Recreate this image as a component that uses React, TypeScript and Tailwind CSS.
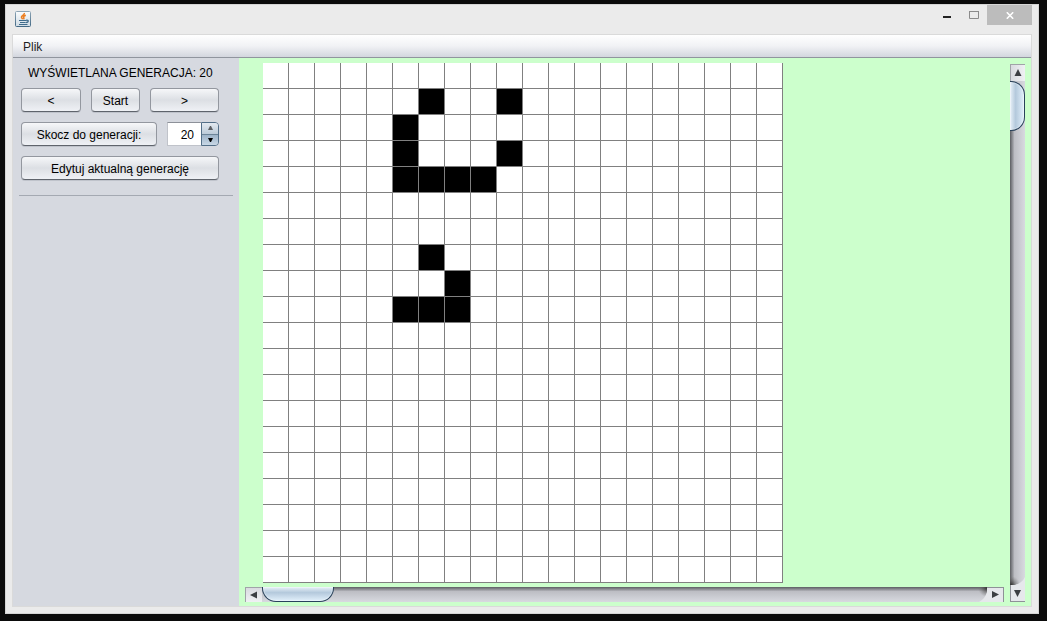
import { useState, type ReactNode } from "react";

const SIZE = 20;
const LIVE = new Set([
  "1-6", "1-9", "2-5", "3-5", "3-9", "4-5", "4-6", "4-7", "4-8",
  "7-6", "8-7", "9-5", "9-6", "9-7",
]);

const buttonStyle =
  "h-6 rounded border border-[#93979f] border-b-[#5f646c] bg-linear-to-b from-[#f6f7f9] via-[#dcdfe4] to-[#eff1f5] shadow-[0_1px_0_#bfc3cb] text-center pt-px leading-5";

function NimbusButton({ className, children, label }: { className: string; children: ReactNode; label?: string }) {
  return (
    <button type="button" aria-label={label} className={`${buttonStyle} ${className}`}>
      {children}
    </button>
  );
}

function JavaIcon() {
  return (
    <svg viewBox="0 0 16 16" className="size-4" aria-hidden="true">
      <defs>
        <linearGradient id="java-bg" x2="0" y2="1">
          <stop stopColor="#fafcfd" />
          <stop offset="1" stopColor="#cfdbe4" />
        </linearGradient>
        <linearGradient id="java-edge" x2="0" y2="1">
          <stop stopColor="#8ea5b5" />
          <stop offset="1" stopColor="#436985" />
        </linearGradient>
      </defs>
      <rect x=".5" y=".5" width="15" height="15" rx="1" fill="url(#java-bg)" stroke="url(#java-edge)" />
      <path d="M9.3 2c.6 2-3 2.5-2.8 4.2.1 1 .9 1.3 1.2 2M10.8 4.3c-1.6.6-2.6 1.2-2.1 2.1.4.7.3 1.2-.2 1.8" fill="none" stroke="#ec7f22" strokeWidth="1.6" />
      <path d="M4 9.5h7M5 11.5h5.5M4 13.5h8.5M11 9.3c3.2-.6 3 2-.2 2.3" fill="none" stroke="#3f6b8b" strokeWidth="1.2" />
    </svg>
  );
}

function TitleBar() {
  return (
    <header className="flex h-[29px] items-start pl-[3px]">
      <div className="pt-[6px]">
        <JavaIcon />
      </div>
      <div className="ml-auto flex">
        <button type="button" aria-label="Minimize" className="flex h-5 w-7 items-center justify-center">
          <svg viewBox="0 0 8 8" className="size-2" aria-hidden="true">
            <path d="M0 5h8v2H0z" fill="#222" />
          </svg>
        </button>
        <button type="button" aria-label="Maximize" className="flex h-5 w-[26px] items-center justify-center">
          <svg viewBox="0 0 10 8" className="h-2 w-[10px]" aria-hidden="true">
            <path d="M.5 .5h9v7h-9z" fill="none" stroke="#8b8b8b" />
            <path d="M0 0h10v1H0z" fill="#8b8b8b" />
          </svg>
        </button>
        <button type="button" aria-label="Close" className="flex h-5 w-[45px] items-center justify-center bg-[#bcbcbc]">
          <svg viewBox="0 0 8 7" className="h-[7px] w-2" aria-hidden="true">
            <path d="M.8 .3l6.4 6.4M7.2 .3L.8 6.7" stroke="#fff" strokeWidth="1.6" />
          </svg>
        </button>
      </div>
    </header>
  );
}

function Sidebar() {
  const [generation, setGeneration] = useState(20);
  return (
    <aside className="w-[226px] shrink-0 bg-[#d6d9e0] px-[6px] pt-2">
      <p className="h-[22px] pl-[9px] leading-[14px]">WYŚWIETLANA GENERACJA: 20</p>
      <div className="flex w-[200px] flex-col gap-[10px] px-[2px]">
        <div className="flex w-[198px] gap-[10px]">
          <NimbusButton className="w-[60px]" label="Poprzednia generacja">&lt;</NimbusButton>
          <NimbusButton className="w-[49px]">Start</NimbusButton>
          <NimbusButton className="flex-1" label="Następna generacja">&gt;</NimbusButton>
        </div>
        <div className="flex w-[198px] gap-[10px]">
          <NimbusButton className="w-[136px]">Skocz do generacji:</NimbusButton>
          <div className="flex h-6 flex-1">
            <input
              aria-label="Numer generacji"
              value={generation}
              onChange={(e) => setGeneration(Number(e.target.value) || 0)}
              className="w-[34px] border border-r-0 border-[#c0c3ca] border-t-[#8d9199] bg-white pt-px pr-[7px] text-right outline-none"
            />
            <div className="flex flex-1 flex-col overflow-hidden rounded-r border border-[#536f88]">
              <button
                type="button"
                aria-label="Zwiększ"
                onClick={() => setGeneration(generation + 1)}
                className="flex flex-1 items-center justify-center border-b border-[#6c8498] bg-linear-to-b from-[#e4eaf0] to-[#bccbd9]"
              >
                <svg viewBox="0 0 5 4" className="h-1 w-[5px]" aria-hidden="true"><path d="M2 0h1l2 4H0z" fill="#5d6064" /></svg>
              </button>
              <button
                type="button"
                aria-label="Zmniejsz"
                onClick={() => setGeneration(generation - 1)}
                className="flex flex-1 items-center justify-center bg-linear-to-b from-[#9db3c8] to-[#c9d8e6]"
              >
                <svg viewBox="0 0 5 4" className="h-1 w-[5px]" aria-hidden="true"><path d="M0 0h5L3 4H2z" fill="#000" /></svg>
              </button>
            </div>
          </div>
        </div>
        <NimbusButton className="w-[198px]">Edytuj aktualną generację</NimbusButton>
      </div>
      <hr className="mt-[15px] border-[#a4a9b2]" />
    </aside>
  );
}

function Board() {
  return (
    <div className="grid w-[520px] grid-cols-20 bg-white">
      {Array.from({ length: SIZE * SIZE }, (_, i) => (
        <div
          key={i}
          className={`size-[26px] border-r border-b border-[#808080] ${LIVE.has(`${Math.floor(i / SIZE)}-${i % SIZE}`) ? "bg-black" : "bg-white"}`}
        />
      ))}
    </div>
  );
}

function HorizontalScrollbar() {
  return (
    <div className="flex h-[15px] bg-linear-to-b from-[#5c5e62] via-[#bdbec4] via-30% to-[#d8dae0]">
      <button type="button" aria-label="W lewo" className="flex w-[17px] items-center justify-center border-t border-l border-[#a0a3a8] bg-linear-to-b from-[#d9dbe0] to-[#f0f1f4] pr-px">
        <svg viewBox="0 0 7 8" className="h-2 w-[7px]" aria-hidden="true"><path d="M7 .5v7L0 4z" fill="#3c3f43" /></svg>
      </button>
      <div className="w-[72px] rounded-b-[14px] border border-t-0 border-[#29425a] bg-linear-to-b from-[#e9f1f8] via-[#b4c9dc] via-40% to-[#e2f0fb] shadow-[inset_0_0_0_1px_#ffffff55]" />
      <button type="button" aria-label="W prawo" className="ml-auto w-[30px]">
        <svg viewBox="0 0 30 15" className="h-[15px] w-[30px]" aria-hidden="true">
          <defs>
            <radialGradient id="track-end-h" cx="13" cy="1" r="9" gradientUnits="userSpaceOnUse">
              <stop stopColor="#333" />
              <stop offset="1" stopColor="#777" stopOpacity="0" />
            </radialGradient>
          </defs>
          <path d="M3 0H13V6Q11 12 5 15z" fill="url(#track-end-h)" />
          <path d="M13 1V5Q11 12 5 15H30V1z" fill="#e6e8ec" />
          <path d="M13 .5H30M29.5 1v14" fill="none" stroke="#8e9197" />
          <path d="M18 4v7l7-3.5z" fill="#3c3f43" />
        </svg>
      </button>
    </div>
  );
}

function VerticalScrollbar() {
  return (
    <div className="flex w-[15px] flex-col bg-linear-to-r from-[#5c5e62] via-[#bdbec4] via-30% to-[#d8dae0]">
      <button type="button" aria-label="W górę" className="flex h-[17px] items-center justify-center border-t border-l border-[#a0a3a8] bg-linear-to-r from-[#d9dbe0] to-[#f0f1f4] pb-px">
        <svg viewBox="0 0 8 7" className="h-[7px] w-2" aria-hidden="true"><path d="M4 0l3.5 7h-7z" fill="#3c3f43" /></svg>
      </button>
      <div className="h-[50px] rounded-r-[14px] border border-l-0 border-[#29425a] bg-linear-to-r from-[#e9f1f8] via-[#b4c9dc] via-40% to-[#e2f0fb] shadow-[inset_0_0_0_1px_#ffffff55]" />
      <button type="button" aria-label="W dół" className="mt-auto h-[30px]">
        <svg viewBox="0 0 15 30" className="h-[30px] w-[15px]" aria-hidden="true">
          <defs>
            <radialGradient id="track-end-v" cx="1" cy="13" r="9" gradientUnits="userSpaceOnUse">
              <stop stopColor="#333" />
              <stop offset="1" stopColor="#777" stopOpacity="0" />
            </radialGradient>
          </defs>
          <path d="M0 3V13H6Q12 11 15 5z" fill="url(#track-end-v)" />
          <path d="M1 13H5Q12 11 15 5V30H1z" fill="#e6e8ec" />
          <path d="M.5 13V30M1 29.5h14" fill="none" stroke="#8e9197" />
          <path d="M4 18h7l-3.5 7z" fill="#3c3f43" />
        </svg>
      </button>
    </div>
  );
}

export default function App() {
  return (
    <div className="flex min-h-screen bg-[#0b0b0b] pt-1 pr-2 pb-[7px] pl-[5px] font-['Liberation_Sans',Arial,sans-serif] text-[12px] text-black">
      <div className="flex flex-1 flex-col border border-[#d5d5d5] bg-[#ebebeb] px-[6px] pb-[6px]">
        <TitleBar />
        <div className="flex flex-1 flex-col border border-[#dadada]">
          <nav className="flex h-[23px] items-center border-b border-[#90959e] bg-linear-to-b from-white via-[#f1f2f5] to-[#d3d6de] pt-px pl-[10px]">
            <button type="button" className="leading-5 text-[#1e1e1e]">Plik</button>
          </nav>
          <div className="flex flex-1">
            <Sidebar />
            <main className="flex flex-1 gap-[6px] bg-[#ccffcc] pr-[6px] pb-1 pl-[6px]">
              <div className="flex flex-1 flex-col justify-between">
                <div className="pt-[5px] pb-1 pl-[18px]">
                  <Board />
                </div>
                <HorizontalScrollbar />
              </div>
              <div className="flex pt-[6px]">
                <VerticalScrollbar />
              </div>
            </main>
          </div>
        </div>
      </div>
    </div>
  );
}
